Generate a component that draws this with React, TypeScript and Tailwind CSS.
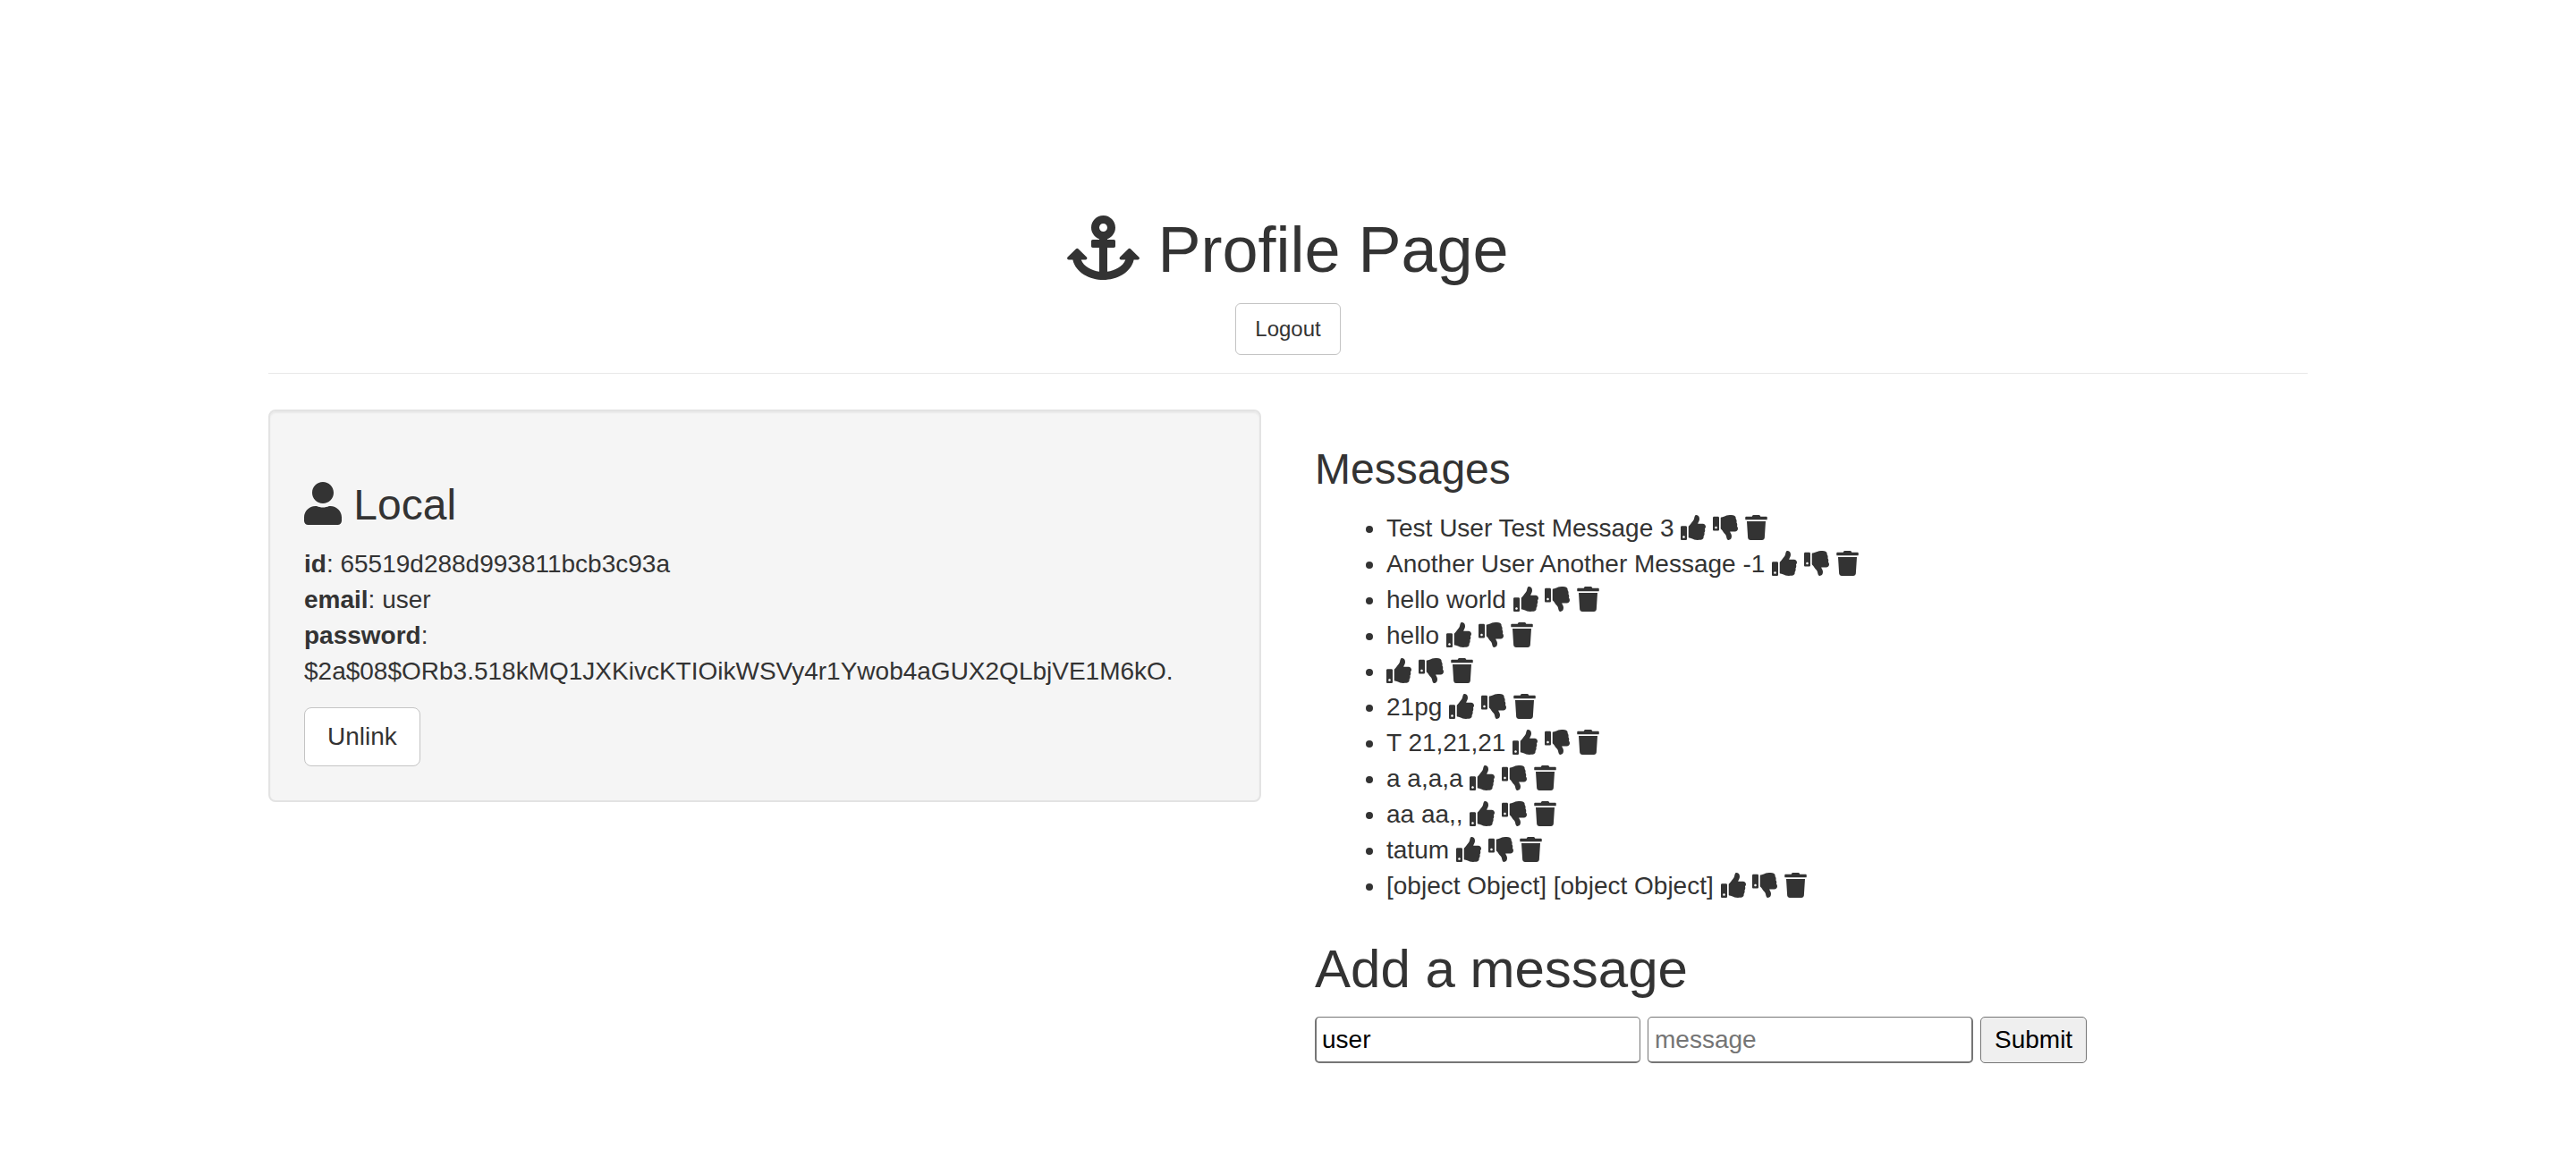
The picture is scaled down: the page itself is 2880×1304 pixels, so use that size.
import { useState } from "react";
import type { ReactNode } from "react";
import { FaAnchor, FaThumbsDown, FaThumbsUp, FaTrash, FaUser } from "react-icons/fa";

const initialMessages: string[] = [
  "Test User Test Message 3",
  "Another User Another Message -1",
  "hello world",
  "hello",
  "",
  "21pg",
  "T 21,21,21",
  "a a,a,a",
  "aa aa,,",
  "tatum",
  "[object Object] [object Object]",
];

function IconButton({ label, children }: { label: string; children: ReactNode }) {
  return (
    <button type="button" aria-label={label} className="inline cursor-pointer">
      {children}
    </button>
  );
}

function Message({ text }: { text: string }) {
  return (
    <li>
      {text}{" "}
      <IconButton label="Like">
        <FaThumbsUp className="inline-block align-[-0.125em]" />
      </IconButton>{" "}
      <IconButton label="Dislike">
        <FaThumbsDown className="inline-block align-[-0.125em]" />
      </IconButton>{" "}
      <IconButton label="Delete">
        <FaTrash className="inline-block w-[25px] align-[-0.125em]" />
      </IconButton>
    </li>
  );
}

export default function App() {
  const [name, setName] = useState("user");
  const [message, setMessage] = useState("");

  return (
    <div className="mx-auto max-w-[2340px] px-[30px] pt-60 pb-10 font-['Liberation_Sans',Arial,sans-serif] text-[28px] leading-10 text-[#333]">
      <header className="mb-10 flex flex-col items-center border-b border-[#e8e8e8] pb-5">
        <h1 className="mb-5 text-[72px] leading-[79px]">
          <FaAnchor className="inline-block w-[81px] align-[-0.125em]" /> Profile Page
        </h1>
        <a
          href="#logout"
          className="rounded-md border border-[#c4c4c4] bg-white px-[21px] py-2.5 text-2xl leading-9"
        >
          Logout
        </a>
      </header>

      <main className="grid grid-cols-2 items-start gap-[60px]">
        <section className="rounded-lg border-2 border-[#e3e3e3] bg-[#f5f5f5] p-[38px] shadow-[inset_0_2px_2px_rgba(0,0,0,0.05)]">
          <h3 className="mt-10 mb-5 text-5xl leading-[53px]">
            <FaUser className="inline-block w-[42px] align-[-0.125em]" /> Local
          </h3>
          <p className="mb-5">
            <strong>id</strong>: 65519d288d993811bcb3c93a
            <br />
            <strong>email</strong>: user
            <br />
            <strong>password</strong>:
            <br />
            $2a$08$ORb3.518kMQ1JXKivcKTIOikWSVy4r1Ywob4aGUX2QLbjVE1M6kO.
          </p>
          <a
            href="#unlink"
            className="inline-block rounded-lg border border-[#c4c4c4] bg-white px-[25px] py-3 align-top"
          >
            Unlink
          </a>
        </section>

        <section>
          <h3 className="mt-10 mb-5 text-5xl leading-[53px]">Messages</h3>
          <ul className="mb-10 list-disc pl-20">
            {initialMessages.map((text, i) => (
              <Message key={i} text={text} />
            ))}
          </ul>

          <h2 className="mb-5 text-6xl leading-[66px]">Add a message</h2>
          <form className="flex flex-wrap gap-2" onSubmit={(e) => e.preventDefault()}>
            <input
              type="text"
              aria-label="name"
              value={name}
              onChange={(e) => setName(e.target.value)}
              className="h-[52px] w-[364px] rounded-[5px] border border-b-2 border-l-2 border-[#767676] bg-white px-1.5 text-black"
            />
            <input
              type="text"
              aria-label="message"
              placeholder="message"
              value={message}
              onChange={(e) => setMessage(e.target.value)}
              className="h-[52px] w-[364px] rounded-[5px] border border-r-2 border-b-2 border-[#767676] bg-white px-[7px] text-black placeholder:text-[#757575]"
            />
            <button
              type="submit"
              className="h-[52px] rounded-[5px] border border-[#767676] bg-[#efefef] px-[15px] text-black"
            >
              Submit
            </button>
          </form>
        </section>
      </main>
    </div>
  );
}
